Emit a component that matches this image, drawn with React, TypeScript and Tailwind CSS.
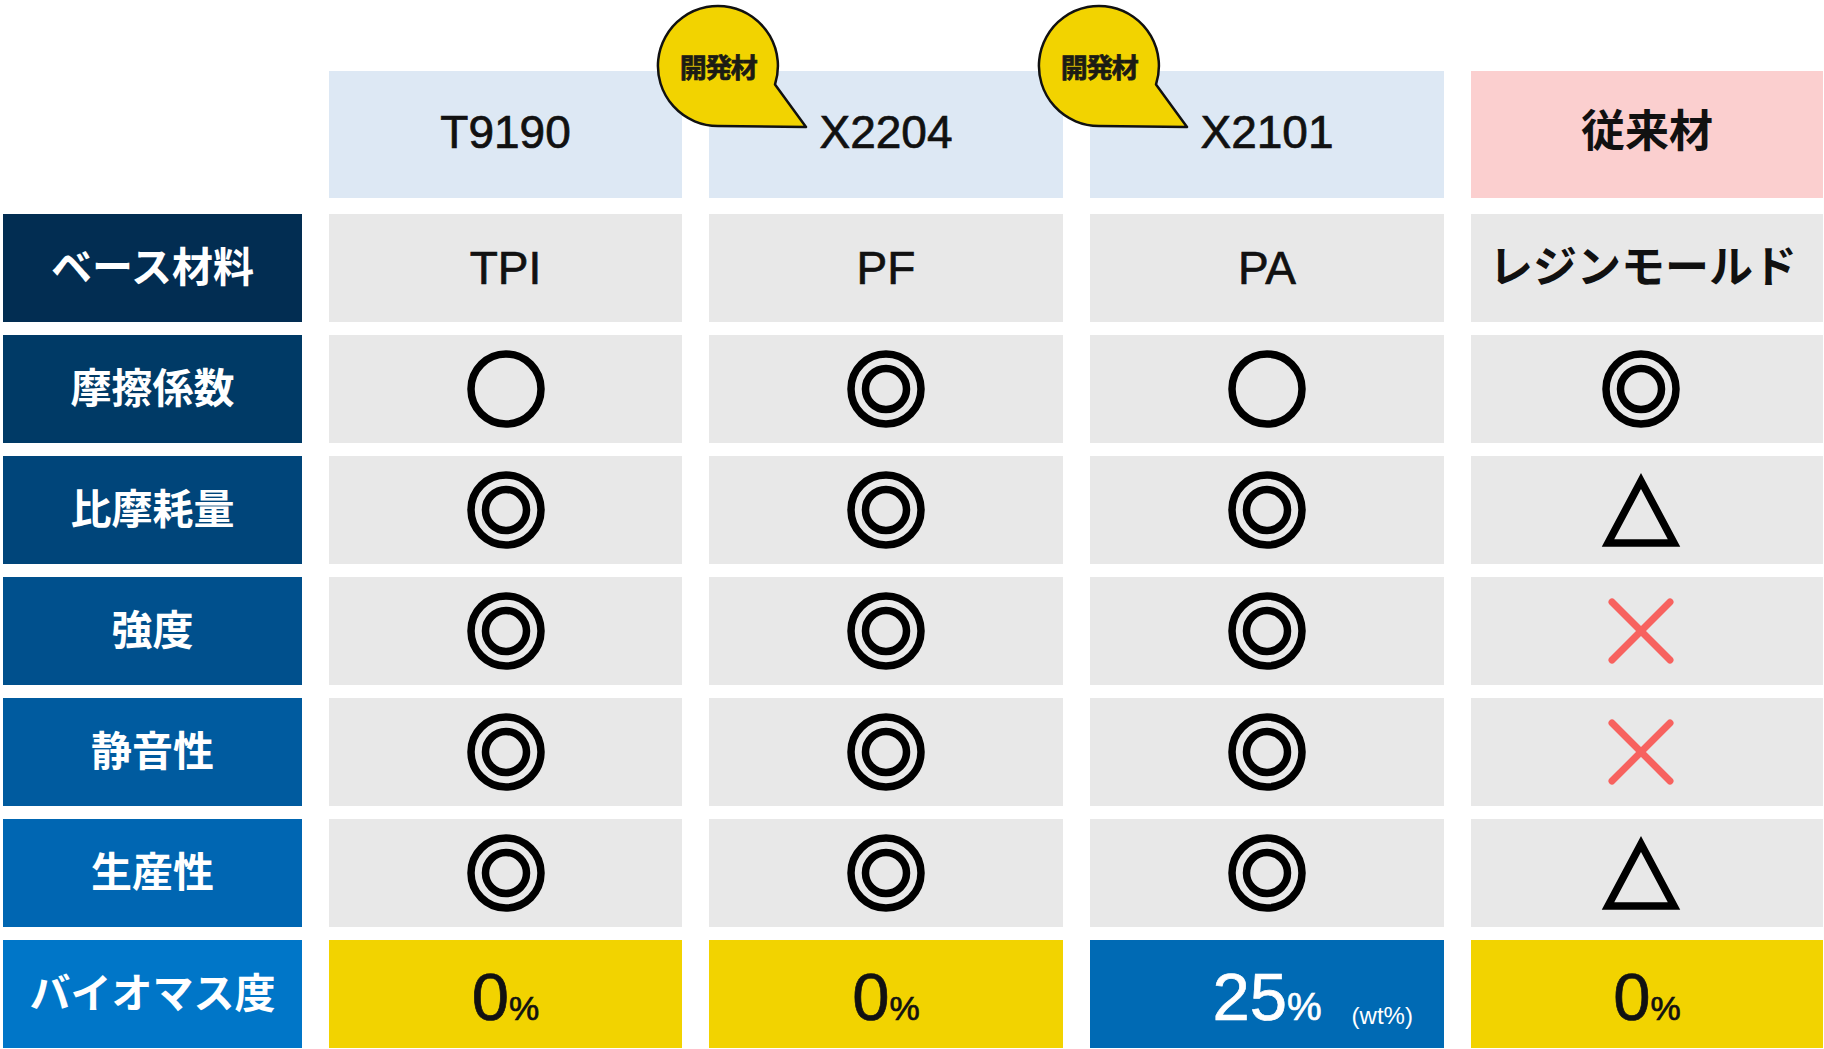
import type { ReactNode } from 'react';

const FONT = '[font-family:"Liberation_Sans","Noto_Sans_CJK_JP",sans-serif]';
// 中太の数字・英字
const MED = '[-webkit-text-stroke:0.7px_currentColor]';

type Mark = 'circle' | 'double' | 'triangle' | 'cross';

function Circle() {
  return (
    <svg width="84" height="84" viewBox="0 0 84 84">
      <circle cx="42" cy="42" r="35" fill="none" stroke="#000" strokeWidth="7.5" />
    </svg>
  );
}

function DoubleCircle() {
  return (
    <svg width="84" height="84" viewBox="0 0 84 84">
      <circle cx="42" cy="42" r="35" fill="none" stroke="#000" strokeWidth="7.5" />
      <circle cx="42" cy="42" r="20.5" fill="none" stroke="#000" strokeWidth="7.5" />
    </svg>
  );
}

function Triangle() {
  return (
    <svg width="84" height="84" viewBox="0 0 84 84">
      <polygon points="42,13 75,75 9,75" fill="none" stroke="#000" strokeWidth="7.5" strokeLinejoin="miter" />
    </svg>
  );
}

function Cross() {
  return (
    <svg width="84" height="84" viewBox="0 0 84 84">
      <g stroke="#f7625f" strokeWidth="7" strokeLinecap="round">
        <line x1="13" y1="13" x2="71" y2="71" />
        <line x1="71" y1="13" x2="13" y2="71" />
      </g>
    </svg>
  );
}

function Symbol({ mark }: { mark: Mark }) {
  if (mark === 'circle') return <Circle />;
  if (mark === 'double') return <DoubleCircle />;
  if (mark === 'triangle') return <Triangle />;
  return <Cross />;
}

// 吹き出し「開発材」
function Bubble() {
  return (
    <div className="absolute left-[-55px] top-[-67px] w-[156px] h-[126px] pointer-events-none">
      <svg width="156" height="126" viewBox="0 0 156 126" className="absolute left-0 top-0">
        <path
          d="M121 80.5 L152 123 L64 122 A60 60 0 1 1 121 80.5 Z"
          fill="#f2d300"
          stroke="#111"
          strokeWidth="2.5"
          strokeLinejoin="round"
        />
      </svg>
      <div className="absolute left-[4px] top-[5px] w-[120px] h-[120px] flex items-center justify-center">
        <span className="text-[27px] leading-none font-bold text-[#1c1c14] tracking-[-1.5px]">開発材</span>
      </div>
    </div>
  );
}

const labelCls = 'flex items-center justify-center text-white font-bold text-[41px] leading-none';
const cellCls = 'flex items-center justify-center bg-[#e8e8e8]';
const latinCls = `text-[46px] leading-none text-[#111] ${MED}`;

const rows: { label: string; bg: string; marks: Mark[] }[] = [
  { label: '摩擦係数', bg: 'bg-[#003a66]', marks: ['circle', 'double', 'circle', 'double'] },
  { label: '比摩耗量', bg: 'bg-[#00457a]', marks: ['double', 'double', 'double', 'triangle'] },
  { label: '強度', bg: 'bg-[#00508d]', marks: ['double', 'double', 'double', 'cross'] },
  { label: '静音性', bg: 'bg-[#005b9f]', marks: ['double', 'double', 'double', 'cross'] },
  { label: '生産性', bg: 'bg-[#0066b2]', marks: ['double', 'double', 'double', 'triangle'] },
];

function Percent({ children }: { children: ReactNode }) {
  return (
    <span className={`leading-none text-[#111] ${MED}`}>
      <span className="text-[67px]">{children}</span>
      <span className="text-[34px]">%</span>
    </span>
  );
}

export default function App() {
  return (
    <div className={`w-[1824px] h-[1049px] bg-white pt-[71px] pl-[3px] overflow-hidden ${FONT}`}>
      {/* header */}
      <div className="grid grid-cols-[299px_353px_354px_354px_352px] gap-x-[27px] h-[127px] mb-[16px]">
        <div />
        <div className={`flex items-center justify-center bg-[#dde8f4] pb-[6px] ${latinCls}`}>T9190</div>
        <div className={`relative flex items-center justify-center bg-[#dde8f4] pb-[6px] ${latinCls}`}>
          <Bubble />
          X2204
        </div>
        <div className={`relative flex items-center justify-center bg-[#dde8f4] pb-[6px] ${latinCls}`}>
          <Bubble />
          X2101
        </div>
        <div className="flex items-center justify-center bg-[#fbcfcf] text-[44px] font-bold leading-none text-[#111] pb-[6px]">従来材</div>
      </div>

      {/* body */}
      <div className="grid grid-cols-[299px_353px_354px_354px_352px] auto-rows-[108px] gap-x-[27px] gap-y-[13px]">
        <div className={`${labelCls} bg-[#022d52]`}>ベース材料</div>
        <div className={`${cellCls} ${latinCls}`}>TPI</div>
        <div className={`${cellCls} ${latinCls}`}>PF</div>
        <div className={`${cellCls} ${latinCls}`}>PA</div>
        <div className={`${cellCls} text-[44px] font-bold leading-none text-[#111] pr-[8px]`}>レジンモールド</div>

        {rows.map((r) => (
          <div key={r.label} className="contents">
            <div className={`${labelCls} ${r.bg}`}>{r.label}</div>
            {r.marks.map((m, i) => (
              <div key={i} className={`${cellCls} ${i === 3 ? 'pr-[12px]' : ''}`}>
                <Symbol mark={m} />
              </div>
            ))}
          </div>
        ))}

        <div className={`${labelCls} bg-[#0076c8]`}>バイオマス度</div>
        <div className="flex items-center justify-center bg-[#f2d300] pt-[4px]">
          <Percent>0</Percent>
        </div>
        <div className="flex items-center justify-center bg-[#f2d300] pt-[4px]">
          <Percent>0</Percent>
        </div>
        <div className="flex items-center justify-center bg-[#006ab4] pt-[4px]">
          <span className={`relative leading-none text-white ${MED}`}>
            <span className="text-[67px]">25</span>
            <span className="text-[39px]">%</span>
            <span className="absolute left-[calc(100%+30px)] bottom-[2px] text-[24px] whitespace-nowrap [-webkit-text-stroke:0px]">(wt%)</span>
          </span>
        </div>
        <div className="flex items-center justify-center bg-[#f2d300] pt-[4px]">
          <Percent>0</Percent>
        </div>
      </div>
    </div>
  );
}
